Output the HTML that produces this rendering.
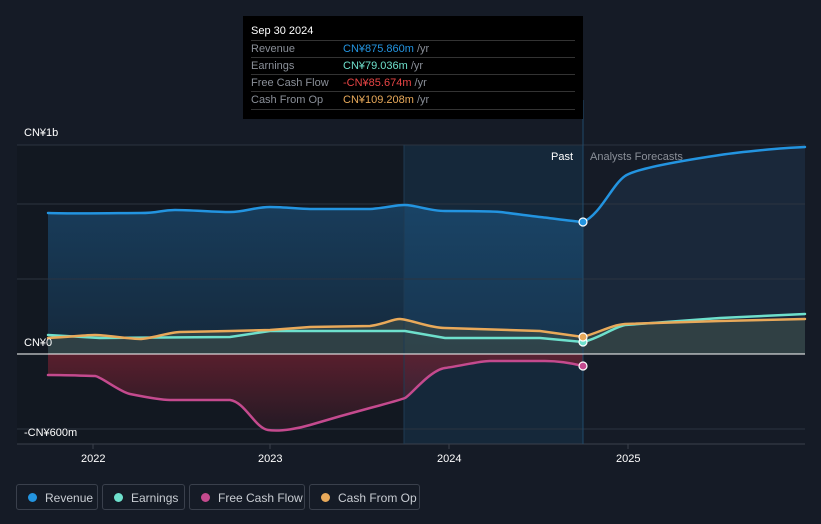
<!DOCTYPE html>
<html><head><meta charset="utf-8"><style>
body{margin:0;background:#151b26;width:821px;height:524px;overflow:hidden;font-family:"Liberation Sans",sans-serif;}
.tt{position:absolute;left:243px;top:16px;width:340px;height:103px;background:#000;font-size:11px;}
.tt .h{position:absolute;left:8px;top:9px;color:#fff;font-size:11px;}
.row{position:absolute;left:8px;width:324px;border-top:1px solid #333;height:17px;line-height:17px;color:#8a8f98;}
.row span{position:absolute;left:92px;}
.row i{font-style:normal;color:#8a8f98}
.leg{position:absolute;top:484px;height:26px;border:1px solid #3a404c;border-radius:3px;color:#c8ccd2;font-size:12px;line-height:26px;box-sizing:border-box;}
.leg b{position:absolute;left:11px;top:8px;width:9px;height:9px;border-radius:50%;}
.leg span{position:absolute;left:28px;}
</style></head><body>
<svg width="821" height="524" style="position:absolute;left:0;top:0">
<defs>
<linearGradient id="rv" x1="0" y1="0" x2="0" y2="1"><stop offset="0" stop-color="#1d5a8a" stop-opacity=".55"/><stop offset="1" stop-color="#1d5a8a" stop-opacity=".25"/></linearGradient>
<linearGradient id="fc" x1="0" y1="0" x2="0" y2="1"><stop offset="0" stop-color="#6a2030" stop-opacity=".8"/><stop offset="1" stop-color="#6a2030" stop-opacity=".2"/></linearGradient>
</defs>
<rect x="17" y="145" width="387" height="299" fill="#121821"/>
<rect x="404" y="145" width="179" height="299" fill="#15283a"/>
<path d="M48,213 C80,214 120,213 140,213 S160,210 175,210 S215,212 230,212 S255,207 270,207 S300,209 310,209 L370,209 C385,208 395,205 405,205 S430,211 445,211 S490,211 500,212 S530,216 540,217 S570,221 583,222 L583,354 L48,354Z" fill="url(#rv)"/>
<path d="M583,222 C600,215 612,185 625,176 S700,158 720,155 S780,148 805,147 L805,354 L583,354Z" fill="#1c2c40" opacity=".8"/>
<path d="M48,338 L95,335 140,339 180,332 230,331 270,330 310,327 370,326 400,319 445,328 540,331 583,337 625,324 720,321 805,319 L805,354 L48,354Z" fill="#3a4a48" opacity=".7"/>
<path d="M48,375 C70,375 90,376 95,376 S120,392 130,394 S160,400 170,400 L230,400 C245,402 255,428 268,430 S300,428 310,425 S355,412 370,408 S400,400 405,398 S430,370 445,368 S480,361 490,361 L545,361 C560,361 575,364 583,366 L583,354 L48,354Z" fill="url(#fc)"/>
<g stroke="#2c3340" stroke-width="1">
<line x1="17" y1="145" x2="805" y2="145"/><line x1="17" y1="204" x2="805" y2="204"/><line x1="17" y1="279" x2="805" y2="279"/><line x1="17" y1="429" x2="805" y2="429"/>
</g>
<line x1="17" y1="444" x2="805" y2="444" stroke="#3a404c"/>
<line x1="404" y1="145" x2="404" y2="444" stroke="#1e3a52"/>
<line x1="583" y1="100" x2="583" y2="444" stroke="#1f4a6a"/>
<line x1="17" y1="354" x2="805" y2="354" stroke="#fff" stroke-width="1"/>
<g fill="none" stroke-width="2.5" stroke-linecap="round">
<path d="M48,335 L100,338 230,337 270,331 405,331 445,338 540,338 583,342 C600,338 612,328 625,325 L720,318 L805,314" stroke="#6ee0cc"/>
<path d="M48,338 C70,337 85,335 95,335 S130,339 140,339 S170,332 180,332 L230,331 270,330 310,327 370,326 C385,324 392,319 400,319 S430,328 445,328 L540,331 583,337 C600,332 612,325 625,324 L720,321 L805,319" stroke="#e8a95a"/>
<path d="M48,375 C70,375 90,376 95,376 S120,392 130,394 S160,400 170,400 L230,400 C245,402 255,428 268,430 S300,428 310,425 S355,412 370,408 S400,400 405,398 S430,370 445,368 S480,361 490,361 L545,361 C560,361 575,364 583,366" stroke="#c44a8e"/>
<path d="M48,213 C80,214 120,213 140,213 S160,210 175,210 S215,212 230,212 S255,207 270,207 S300,209 310,209 L370,209 C385,208 395,205 405,205 S430,211 445,211 S490,211 500,212 S530,216 540,217 S570,221 583,222 C600,215 612,185 625,176 S700,158 720,155 S780,148 805,147" stroke="#2394e0"/>
</g>
<g stroke="#fff" stroke-width="1.2">
<circle cx="583" cy="222" r="4" fill="#2394e0"/>
<circle cx="583" cy="342" r="4" fill="#6ee0cc"/>
<circle cx="583" cy="337" r="4" fill="#e8a95a"/>
<circle cx="583" cy="366" r="4" fill="#c44a8e"/>
</g>
<g font-size="11" fill="#fff">
<text x="24" y="136">CN¥1b</text><text x="24" y="346">CN¥0</text><text x="24" y="436">-CN¥600m</text>
<text x="551" y="160">Past</text><text x="590" y="160" fill="#8a8f98">Analysts Forecasts</text>
<text x="81" y="462">2022</text><text x="258" y="462">2023</text><text x="437" y="462">2024</text><text x="616" y="462">2025</text>
</g>
<g stroke="#3a404c"><line x1="93" y1="444" x2="93" y2="449"/><line x1="270" y1="444" x2="270" y2="449"/><line x1="449" y1="444" x2="449" y2="449"/><line x1="628" y1="444" x2="628" y2="449"/></g>
</svg>
<div class="tt"><div class="h">Sep 30 2024</div>
<div class="row" style="top:24px"><span style="color:#2394e0">CN¥875.860m <i>/yr</i></span>Revenue</div>
<div class="row" style="top:41px"><span style="color:#6ee0cc">CN¥79.036m <i>/yr</i></span>Earnings</div>
<div class="row" style="top:58px"><span style="color:#e84545">-CN¥85.674m <i>/yr</i></span>Free Cash Flow</div>
<div class="row" style="top:75px;border-bottom:1px solid #333"><span style="color:#e8a95a">CN¥109.208m <i>/yr</i></span>Cash From Op</div>
</div>
<div class="leg" style="left:16px;width:82px"><b style="background:#2394e0"></b><span>Revenue</span></div>
<div class="leg" style="left:102px;width:83px"><b style="background:#6ee0cc"></b><span>Earnings</span></div>
<div class="leg" style="left:189px;width:116px"><b style="background:#c44a8e"></b><span>Free Cash Flow</span></div>
<div class="leg" style="left:309px;width:111px"><b style="background:#e8a95a"></b><span>Cash From Op</span></div>
</body></html>
